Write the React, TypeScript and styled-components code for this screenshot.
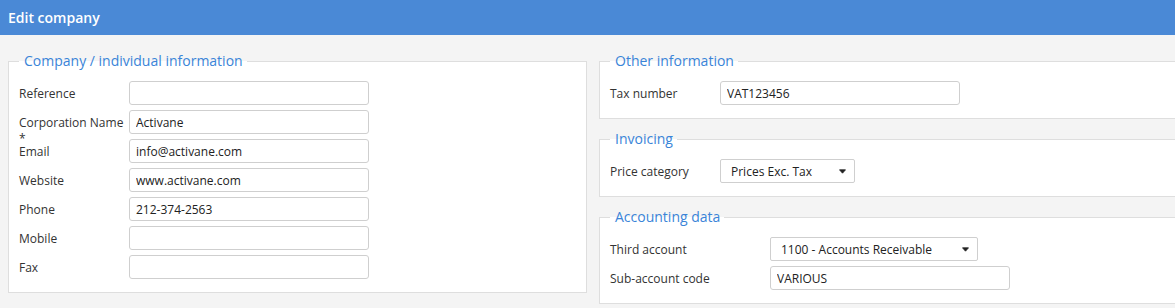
import React from "react";
import styled, { createGlobalStyle } from "styled-components";

const Global = createGlobalStyle`
  html, body { margin: 0; padding: 0; background: #f4f4f4; }
  body { font-family: "Open Sans", "Liberation Sans", sans-serif; overflow: hidden; }
  * { box-sizing: border-box; }
`;

const Page = styled.div`
  width: 1175px;
  height: 308px;
  overflow: hidden;
  background: #f4f4f4;
`;

const Header = styled.header`
  height: 35px;
  background: #4a89d6;
  color: #fff;
  display: flex;
  align-items: center;
  padding: 0 8px 1px;
  font-size: 14px;
  font-weight: 600;
`;

const Columns = styled.div`
  display: grid;
  grid-template-columns: 579px 579px;
  column-gap: 12px;
  width: 1170px;
  padding: 16px 0 0 8px;
  align-items: start;
`;

const Column = styled.div`
  display: flex;
  flex-direction: column;
  gap: 10px;
`;

const Fieldset = styled.fieldset`
  margin: 0;
  padding: 10px 10px 13px;
  border: 1px solid #dedede;
  background: #fff;
  min-width: 0;
  display: flex;
  flex-direction: column;
  gap: 5px;
`;

const Legend = styled.legend`
  padding: 0 4px 0 5px;
  margin-left: 0;
  font-size: 14px;
  line-height: 20px;
  color: #3a84d8;
`;

const Row = styled.div<{ $labelWidth: number }>`
  display: grid;
  grid-template-columns: ${(p) => p.$labelWidth}px auto;
  justify-content: start;
  height: 24px;
`;

const Label = styled.label`
  font-size: 12px;
  line-height: 16px;
  padding-top: 5px;
  color: #333;
  height: 24px;
  white-space: normal;
  overflow: visible;
  position: relative;
  z-index: 1;
`;

const Input = styled.input<{ $width: number }>`
  width: ${(p) => p.$width}px;
  height: 24px;
  border: 1px solid #cfcfcf;
  border-radius: 3px;
  background: #fff;
  padding: 0 6px;
  font-family: inherit;
  font-size: 12px;
  color: #222;
  outline: none;
`;

const Select = styled.div<{ $width: number }>`
  width: ${(p) => p.$width}px;
  height: 24px;
  border: 1px solid #cfcfcf;
  border-radius: 2px;
  background: #fff;
  padding: 0 8px 0 10px;
  display: flex;
  align-items: center;
  justify-content: space-between;
  font-size: 12px;
  color: #222;
`;

const Caret = () => (
  <svg width="7" height="5" viewBox="0 0 7 5">
    <path d="M0.5 0.8 L6.5 0.8 L3.5 4.2 Z" fill="#222" stroke="#222" strokeWidth="0.8" strokeLinejoin="round" />
  </svg>
);

type Field = { label: string; value?: string; width?: number; select?: boolean };

const Section: React.FC<{ title: string; fields: Field[]; labelWidth?: number }> = ({
  title,
  fields,
  labelWidth = 110,
}) => (
  <Fieldset>
    <Legend>{title}</Legend>
    {fields.map((f) => (
      <Row key={f.label} $labelWidth={labelWidth}>
        <Label>{f.label}</Label>
        {f.select ? (
          <Select $width={f.width ?? 240}>
            <span>{f.value}</span>
            <Caret />
          </Select>
        ) : (
          <Input $width={f.width ?? 240} defaultValue={f.value ?? ""} />
        )}
      </Row>
    ))}
  </Fieldset>
);

export default function App() {
  return (
    <Page>
      <Global />
      <Header>Edit company</Header>
      <Columns>
        <Column>
          <Section
            title="Company / individual information"
            fields={[
              { label: "Reference" },
              { label: "Corporation Name *", value: "Activane" },
              { label: "Email", value: "info@activane.com" },
              { label: "Website", value: "www.activane.com" },
              { label: "Phone", value: "212-374-2563" },
              { label: "Mobile" },
              { label: "Fax" },
            ]}
          />
          <Section title="Contacts" fields={[{ label: "Contact" }]} />
        </Column>
        <Column>
          <Section title="Other information" fields={[{ label: "Tax number", value: "VAT123456" }]} />
          <Section
            title="Invoicing"
            fields={[{ label: "Price category", value: "Prices Exc. Tax", select: true, width: 135 }]}
          />
          <Section
            title="Accounting data"
            labelWidth={160}
            fields={[
              { label: "Third account", value: "1100 - Accounts Receivable", select: true, width: 208 },
              { label: "Sub-account code", value: "VARIOUS" },
            ]}
          />
        </Column>
      </Columns>
    </Page>
  );
}
